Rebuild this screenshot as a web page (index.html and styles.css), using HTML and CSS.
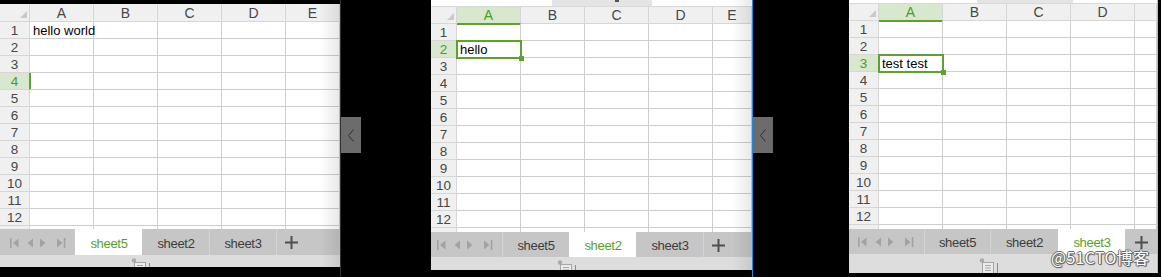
FILE: index.html
```html
<!DOCTYPE html>
<html>
<head>
<meta charset="utf-8">
<link rel="stylesheet" href="styles.css">
</head>
<body>
<div class="screen">

  <section class="panel p1">
    <div class="grid">
      <div class="h corner"><span class="tri"></span></div><div class="h">A</div><div class="h">B</div><div class="h">C</div><div class="h">D</div><div class="h">E</div>
      <div class="r">1</div><div class="c">hello world</div><div class="c"></div><div class="c"></div><div class="c"></div><div class="c"></div>
      <div class="r">2</div><div class="c"></div><div class="c"></div><div class="c"></div><div class="c"></div><div class="c"></div>
      <div class="r">3</div><div class="c"></div><div class="c"></div><div class="c"></div><div class="c"></div><div class="c"></div>
      <div class="r hl hl-side">4</div><div class="c"></div><div class="c"></div><div class="c"></div><div class="c"></div><div class="c"></div>
      <div class="r">5</div><div class="c"></div><div class="c"></div><div class="c"></div><div class="c"></div><div class="c"></div>
      <div class="r">6</div><div class="c"></div><div class="c"></div><div class="c"></div><div class="c"></div><div class="c"></div>
      <div class="r">7</div><div class="c"></div><div class="c"></div><div class="c"></div><div class="c"></div><div class="c"></div>
      <div class="r">8</div><div class="c"></div><div class="c"></div><div class="c"></div><div class="c"></div><div class="c"></div>
      <div class="r">9</div><div class="c"></div><div class="c"></div><div class="c"></div><div class="c"></div><div class="c"></div>
      <div class="r">10</div><div class="c"></div><div class="c"></div><div class="c"></div><div class="c"></div><div class="c"></div>
      <div class="r">11</div><div class="c"></div><div class="c"></div><div class="c"></div><div class="c"></div><div class="c"></div>
      <div class="r">12</div><div class="c"></div><div class="c"></div><div class="c"></div><div class="c"></div><div class="c"></div>
      <div class="r"></div><div class="c"></div><div class="c"></div><div class="c"></div><div class="c"></div><div class="c"></div>
    </div>
    <div class="tabbar">
      <div class="nav">
        <svg width="56" height="10" viewBox="0 0 56 10"><rect x="0" y="0" width="1.6" height="10" fill="#a2a2a2"/><polygon points="8.5,0.5 8.5,9.5 3,5" fill="#a2a2a2"/><polygon points="23,0.5 23,9.5 17.5,5" fill="#a2a2a2"/><polygon points="30,0.5 30,9.5 35.5,5" fill="#a2a2a2"/><polygon points="47,0.5 47,9.5 52.5,5" fill="#a2a2a2"/><rect x="53.8" y="0" width="1.6" height="10" fill="#a2a2a2"/></svg>
      </div>
      <div class="tab active">sheet5</div>
      <div class="tab">sheet2</div>
      <div class="tab">sheet3</div>
      <div class="tab add"><svg width="13" height="13" viewBox="0 0 13 13"><rect x="5.5" y="0" width="2" height="13" fill="#4f4f4f"/><rect x="0" y="5.5" width="13" height="2" fill="#4f4f4f"/></svg></div>
    </div>
    <div class="status">
      <svg width="22" height="16" viewBox="0 0 22 16"><circle cx="3" cy="2.5" r="2.2" fill="#a9a9a9"/><rect x="3.5" y="4.5" width="11" height="11" fill="#ececec" stroke="#a5a5a5"/><path d="M6 7.5h6M6 10h6M6 12.5h6" stroke="#a5a5a5"/><path d="M18.5 5v11" stroke="#8e8e8e"/></svg>
    </div>
    <div class="fade"></div>
  </section>

  <div class="gutter g1">
    <div class="collapse"><svg width="8" height="13" viewBox="0 0 8 13"><path d="M6.5 0.5 L1.5 6.5 L6.5 12.5" fill="none" stroke="#2e2e2e" stroke-width="1"/></svg></div>
  </div>

  <section class="panel p2">
    <div class="strip"><span class="strip-seg"><i class="strip-mark"></i></span></div>
    <div class="grid">
      <div class="h corner"><span class="tri"></span></div><div class="h hl hl-bottom">A</div><div class="h">B</div><div class="h">C</div><div class="h">D</div><div class="h">E</div>
      <div class="r">1</div><div class="c"></div><div class="c"></div><div class="c"></div><div class="c"></div><div class="c"></div>
      <div class="r hl">2</div><div class="c sel">hello</div><div class="c"></div><div class="c"></div><div class="c"></div><div class="c"></div>
      <div class="r">3</div><div class="c"></div><div class="c"></div><div class="c"></div><div class="c"></div><div class="c"></div>
      <div class="r">4</div><div class="c"></div><div class="c"></div><div class="c"></div><div class="c"></div><div class="c"></div>
      <div class="r">5</div><div class="c"></div><div class="c"></div><div class="c"></div><div class="c"></div><div class="c"></div>
      <div class="r">6</div><div class="c"></div><div class="c"></div><div class="c"></div><div class="c"></div><div class="c"></div>
      <div class="r">7</div><div class="c"></div><div class="c"></div><div class="c"></div><div class="c"></div><div class="c"></div>
      <div class="r">8</div><div class="c"></div><div class="c"></div><div class="c"></div><div class="c"></div><div class="c"></div>
      <div class="r">9</div><div class="c"></div><div class="c"></div><div class="c"></div><div class="c"></div><div class="c"></div>
      <div class="r">10</div><div class="c"></div><div class="c"></div><div class="c"></div><div class="c"></div><div class="c"></div>
      <div class="r">11</div><div class="c"></div><div class="c"></div><div class="c"></div><div class="c"></div><div class="c"></div>
      <div class="r">12</div><div class="c"></div><div class="c"></div><div class="c"></div><div class="c"></div><div class="c"></div>
      <div class="r"></div><div class="c"></div><div class="c"></div><div class="c"></div><div class="c"></div><div class="c"></div>
    </div>
    <div class="tabbar">
      <div class="nav">
        <svg width="56" height="10" viewBox="0 0 56 10"><rect x="0" y="0" width="1.6" height="10" fill="#a2a2a2"/><polygon points="8.5,0.5 8.5,9.5 3,5" fill="#a2a2a2"/><polygon points="23,0.5 23,9.5 17.5,5" fill="#a2a2a2"/><polygon points="30,0.5 30,9.5 35.5,5" fill="#a2a2a2"/><polygon points="47,0.5 47,9.5 52.5,5" fill="#a2a2a2"/><rect x="53.8" y="0" width="1.6" height="10" fill="#a2a2a2"/></svg>
      </div>
      <div class="tab">sheet5</div>
      <div class="tab active">sheet2</div>
      <div class="tab">sheet3</div>
      <div class="tab add"><svg width="13" height="13" viewBox="0 0 13 13"><rect x="5.5" y="0" width="2" height="13" fill="#4f4f4f"/><rect x="0" y="5.5" width="13" height="2" fill="#4f4f4f"/></svg></div>
    </div>
    <div class="status">
      <svg width="22" height="16" viewBox="0 0 22 16"><circle cx="3" cy="2.5" r="2.2" fill="#a9a9a9"/><rect x="3.5" y="4.5" width="11" height="11" fill="#ececec" stroke="#a5a5a5"/><path d="M6 7.5h6M6 10h6M6 12.5h6" stroke="#a5a5a5"/><path d="M18.5 5v11" stroke="#8e8e8e"/></svg>
    </div>
    <div class="fade"></div>
  </section>

  <div class="divider"></div>

  <div class="gutter g2">
    <div class="collapse"><svg width="8" height="13" viewBox="0 0 8 13"><path d="M6.5 0.5 L1.5 6.5 L6.5 12.5" fill="none" stroke="#2e2e2e" stroke-width="1"/></svg></div>
  </div>

  <section class="panel p3">
    <div class="strip"><span class="strip-seg"></span></div>
    <div class="grid">
      <div class="h corner"><span class="tri"></span></div><div class="h hl hl-bottom">A</div><div class="h">B</div><div class="h">C</div><div class="h">D</div><div class="h"></div>
      <div class="r">1</div><div class="c"></div><div class="c"></div><div class="c"></div><div class="c"></div><div class="c"></div>
      <div class="r">2</div><div class="c"></div><div class="c"></div><div class="c"></div><div class="c"></div><div class="c"></div>
      <div class="r hl">3</div><div class="c sel">test test</div><div class="c"></div><div class="c"></div><div class="c"></div><div class="c"></div>
      <div class="r">4</div><div class="c"></div><div class="c"></div><div class="c"></div><div class="c"></div><div class="c"></div>
      <div class="r">5</div><div class="c"></div><div class="c"></div><div class="c"></div><div class="c"></div><div class="c"></div>
      <div class="r">6</div><div class="c"></div><div class="c"></div><div class="c"></div><div class="c"></div><div class="c"></div>
      <div class="r">7</div><div class="c"></div><div class="c"></div><div class="c"></div><div class="c"></div><div class="c"></div>
      <div class="r">8</div><div class="c"></div><div class="c"></div><div class="c"></div><div class="c"></div><div class="c"></div>
      <div class="r">9</div><div class="c"></div><div class="c"></div><div class="c"></div><div class="c"></div><div class="c"></div>
      <div class="r">10</div><div class="c"></div><div class="c"></div><div class="c"></div><div class="c"></div><div class="c"></div>
      <div class="r">11</div><div class="c"></div><div class="c"></div><div class="c"></div><div class="c"></div><div class="c"></div>
      <div class="r">12</div><div class="c"></div><div class="c"></div><div class="c"></div><div class="c"></div><div class="c"></div>
      <div class="r"></div><div class="c"></div><div class="c"></div><div class="c"></div><div class="c"></div><div class="c"></div>
    </div>
    <div class="tabbar">
      <div class="nav">
        <svg width="56" height="10" viewBox="0 0 56 10"><rect x="0" y="0" width="1.6" height="10" fill="#a2a2a2"/><polygon points="8.5,0.5 8.5,9.5 3,5" fill="#a2a2a2"/><polygon points="23,0.5 23,9.5 17.5,5" fill="#a2a2a2"/><polygon points="30,0.5 30,9.5 35.5,5" fill="#a2a2a2"/><polygon points="47,0.5 47,9.5 52.5,5" fill="#a2a2a2"/><rect x="53.8" y="0" width="1.6" height="10" fill="#a2a2a2"/></svg>
      </div>
      <div class="tab">sheet5</div>
      <div class="tab">sheet2</div>
      <div class="tab active">sheet3</div>
      <div class="tab add"><svg width="13" height="13" viewBox="0 0 13 13"><rect x="5.5" y="0" width="2" height="13" fill="#4f4f4f"/><rect x="0" y="5.5" width="13" height="2" fill="#4f4f4f"/></svg></div>
    </div>
    <div class="status">
      <svg width="22" height="16" viewBox="0 0 22 16"><circle cx="3" cy="2.5" r="2.2" fill="#a9a9a9"/><rect x="3.5" y="4.5" width="11" height="11" fill="#ececec" stroke="#a5a5a5"/><path d="M6 7.5h6M6 10h6M6 12.5h6" stroke="#a5a5a5"/><path d="M18.5 5v11" stroke="#8e8e8e"/></svg>
    </div>
  </section>

  <div class="edge"></div>

  <div class="watermark">@51CTO博客</div>
</div>
</body>
</html>
```

FILE: styles.css
```css
* { box-sizing: border-box; margin: 0; padding: 0; }

html, body {
  width: 1161px;
  height: 277px;
  overflow: hidden;
  background: #000;
}

body {
  font-family: "Liberation Sans", Arial, sans-serif;
  color: #000;
}

.screen {
  position: relative;
  display: flex;
  align-items: flex-start;
  height: 277px;
}

/* ---------- panels ---------- */
.panel {
  position: relative;
  display: flex;
  flex-direction: column;
  flex: none;
  background: #fff;
  overflow: hidden;
}

.p1 { width: 340px; margin-top: 4px; --rh: 30px; --hh: 18px; --nav: 75px; --navpad: 10px; --tabh: 26px; --stath: 12px; --statpad: 131px; }
.p2 { width: 321px; --rh: 26px; --hh: 17px; --nav: 71px; --navpad: 6px; --tabh: 25px; --stath: 13px; --statpad: 126px; }
.p3 { width: 309px; --rh: 30px; --hh: 17px; --nav: 75px; --navpad: 9px; --tabh: 25px; --stath: 19px; --statpad: 130px; border-right: 1px solid #b9b9b9; }

/* top toolbar remnant */
.strip {
  display: flex;
  background: #fff;
  border-bottom: 1px solid #d9d9d9;
}
.p2 .strip { height: 7px; padding-left: 121px; }
.p3 .strip { height: 4px; padding-left: 128px; }

.strip-seg {
  display: flex;
  justify-content: center;
  width: 100px;
  background: #e4e4e4;
}
.p3 .strip-seg { width: 96px; }

.strip-mark {
  width: 4px;
  height: 2px;
  margin-left: 30px;
  background: #555;
}

/* ---------- grid ---------- */
.grid {
  display: grid;
  grid-template-columns: var(--rh) repeat(4, 64px) 1fr;
  grid-template-rows: var(--hh);
  grid-auto-rows: 17px;
  align-content: start;
  height: 225px;
  overflow: hidden;
  flex: none;
}

.h, .r, .c {
  border-right: 1px solid #cdcdcd;
  border-bottom: 1px solid #cdcdcd;
}

.h {
  display: flex;
  align-items: center;
  justify-content: center;
  background: #f0f0f0;
  color: #474747;
  font-size: 14px;
  line-height: 16px;
  border-color: #d6d6d6;
}

.corner {
  align-items: flex-end;
  justify-content: flex-end;
  padding: 0 2px 3px 0;
}

.tri {
  width: 0;
  height: 0;
  border-left: 7px solid transparent;
  border-bottom: 7px solid #c9c9c9;
}

.r {
  display: flex;
  align-items: center;
  justify-content: center;
  padding-top: 2px;
  background: #f0f0f0;
  color: #474747;
  font-size: 13.5px;
  line-height: 14px;
  border-right-color: #d6d6d6;
  border-bottom-color: #d6d6d6;
}

.c {
  font-size: 13px;
  line-height: 16px;
  padding: 1px 0 0 3px;
  white-space: nowrap;
}

.hl {
  background: #d7e8cf;
  color: #4e9a26;
}

.hl-bottom {
  border-bottom-color: #5ea12e;
  box-shadow: 0 1px 0 #5ea12e;
}

.hl-side {
  border-right-color: #5ea12e;
  box-shadow: 1px 0 0 #5ea12e;
}

.sel {
  position: relative;
}
.sel::before {
  content: "";
  position: absolute;
  left: -1px;
  top: -1px;
  right: -2px;
  bottom: -2px;
  border: 2px solid #5ea12e;
}
.sel::after {
  content: "";
  position: absolute;
  right: -4px;
  bottom: -4px;
  width: 5px;
  height: 5px;
  background: #5ea12e;
}

/* ---------- sheet tabs ---------- */
.tabbar {
  display: flex;
  height: var(--tabh);
  background: #c6c6c6;
  flex: none;
}

.nav {
  display: flex;
  align-items: center;
  width: var(--nav);
  padding-left: var(--navpad);
  padding-top: 1px;
  flex: none;
}

.tab {
  display: flex;
  align-items: center;
  justify-content: center;
  width: 67px;
  flex: none;
  padding-top: 2px;
  border-left: 1px solid #d4d4d4;
  color: #3d3d3d;
  font-size: 13px;
  line-height: 13px;
  letter-spacing: -0.3px;
}

.p3 .tab:nth-child(2) { width: 66px; }
.p3 .tab:nth-child(3) { width: 68px; }

.tab.active {
  background: #fff;
  color: #5a9e2a;
  border-left-color: transparent;
}

.tab.active + .tab { border-left-color: transparent; }

.tab.add {
  width: 30px;
  padding-top: 1px;
}
.p3 .tab.add { width: 32px; }

.status {
  display: flex;
  align-items: flex-start;
  height: var(--stath);
  padding-top: 3px;
  padding-left: var(--statpad);
  background: #dddddd;
  overflow: hidden;
  flex: none;
}
.p3 .status { padding-top: 4px; }

.fade {
  position: absolute;
  top: 0;
  right: 0;
  bottom: 0;
  width: 20px;
  background: linear-gradient(to right, rgba(0, 0, 0, 0), rgba(0, 0, 0, 0.09));
  pointer-events: none;
}

/* ---------- gutters ---------- */
.gutter {
  align-self: stretch;
  flex: none;
  padding-top: 117px;
}

.g1 {
  width: 91px;
  border-left: 1px solid #333;
}

.g2 {
  width: 96px;
}

.collapse {
  display: flex;
  align-items: center;
  justify-content: center;
  width: 20px;
  height: 36px;
  background: #6c6c6c;
}

.divider {
  align-self: stretch;
  width: 1px;
  flex: none;
  background: #2587e0;
}

.edge {
  flex: 1;
}

/* ---------- watermark ---------- */
.watermark {
  position: absolute;
  left: 1051px;
  top: 249px;
  font-family: "Noto Sans CJK SC", "Noto Sans", sans-serif;
  font-size: 16px;
  line-height: 16px;
  letter-spacing: 0.3px;
  color: #fff;
  text-shadow: 1px 0 0 #6a6a6a, -1px 0 0 #6a6a6a, 0 1px 0 #6a6a6a, 0 -1px 0 #6a6a6a, 1px 1px 1px #555;
}
```
